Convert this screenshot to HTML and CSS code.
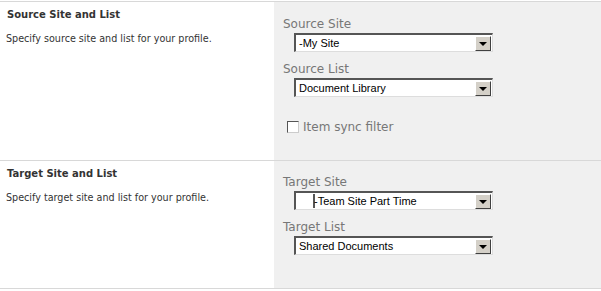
FILE: index.html
```html
<!DOCTYPE html>
<html lang="en">

<head>
    <meta charset="UTF-8">
    <title>Profile Settings</title>
    <link rel="stylesheet" href="styles.css">
</head>

<body>
    <div class="section">
        <div class="desc">
            <h3>Source Site and List</h3>
            <p>Specify source site and list for your profile.</p>
        </div>
        <div class="fields">
            <label>Source Site</label>
            <div class="select"><span class="value">-My Site</span><span class="arrow"></span></div>
            <label>Source List</label>
            <div class="select"><span class="value">Document Library</span><span class="arrow"></span></div>
            <div class="check">
                <span class="box"></span>
                <span>Item sync filter</span>
            </div>
        </div>
    </div>
    <div class="section">
        <div class="desc">
            <h3>Target Site and List</h3>
            <p>Specify target site and list for your profile.</p>
        </div>
        <div class="fields">
            <label>Target Site</label>
            <div class="select"><span class="value indent"><span class="caret"></span>-Team Site Part Time</span><span class="arrow"></span></div>
            <label>Target List</label>
            <div class="select"><span class="value">Shared Documents</span><span class="arrow"></span></div>
        </div>
    </div>
</body>

</html>
```

FILE: styles.css
```css
body {
    margin: 0;
    padding-top: 1px;
    background: #fff;
    font-family: Tahoma, "DejaVu Sans", sans-serif;
    width: 601px;
}

.section {
    display: flex;
    border-top: 1px solid #d8d8d8;
}

.section:last-child {
    border-bottom: 1px solid #d8d8d8;
}

.desc {
    width: 274px;
    padding: 6px 0 0 7px;
    box-sizing: border-box;
}

.desc h3 {
    margin: 0;
    font-size: 10px;
    font-weight: bold;
    color: #333;
    line-height: 14px;
}

.desc p {
    margin: 10px 0 0 -1px;
    font-size: 9.6px;
    color: #333;
    line-height: 14px;
}

.fields {
    flex: 1;
    background: #f0f0f0;
    padding: 14px 0 0 9px;
    display: flex;
    flex-direction: column;
    align-items: flex-start;
}

.section:first-child .fields {
    height: 158px;
    box-sizing: border-box;
}

.section:last-child .fields {
    height: 127px;
    box-sizing: border-box;
    padding-top: 13px;
}

label {
    font-size: 12px;
    color: #777;
    line-height: 16px;
    margin-bottom: 1px;
}

.select {
    margin-left: 11px;
    width: 199px;
    height: 19px;
    box-sizing: border-box;
    background: #fff;
    border-top: 2px solid #555;
    border-left: 2px solid #555;
    border-right: 1px solid #ddd;
    border-bottom: 1px solid #ddd;
    display: flex;
    align-items: center;
    margin-bottom: 9px;
}

.value {
    flex: 1;
    font-family: "Liberation Sans", Arial, sans-serif;
    font-size: 11px;
    color: #000;
    padding-left: 3px;
}

.value.indent {
    padding-left: 17px;
    display: flex;
    align-items: center;
}

.caret {
    width: 2px;
    height: 14px;
    background: #555;
    margin-right: -1px;
}

.arrow {
    width: 16px;
    height: 15px;
    margin-right: 1px;
    box-sizing: border-box;
    background: #d4d0c8;
    border-top: 1px solid #fff;
    border-left: 1px solid #fff;
    border-right: 1px solid #404040;
    border-bottom: 1px solid #404040;
    position: relative;
}

.arrow::after {
    content: "";
    position: absolute;
    left: 3px;
    top: 5px;
    border-left: 4px solid transparent;
    border-right: 4px solid transparent;
    border-top: 4px solid #000;
}

.check {
    display: flex;
    align-items: center;
    margin-top: 14px;
    margin-left: 4px;
    font-size: 12px;
    color: #777;
}

.box {
    width: 12px;
    height: 12px;
    box-sizing: border-box;
    background: #fff;
    border-top: 1px solid #555;
    border-left: 1px solid #555;
    border-right: 1px solid #ccc;
    border-bottom: 1px solid #ccc;
    margin-right: 4px;
}
```
